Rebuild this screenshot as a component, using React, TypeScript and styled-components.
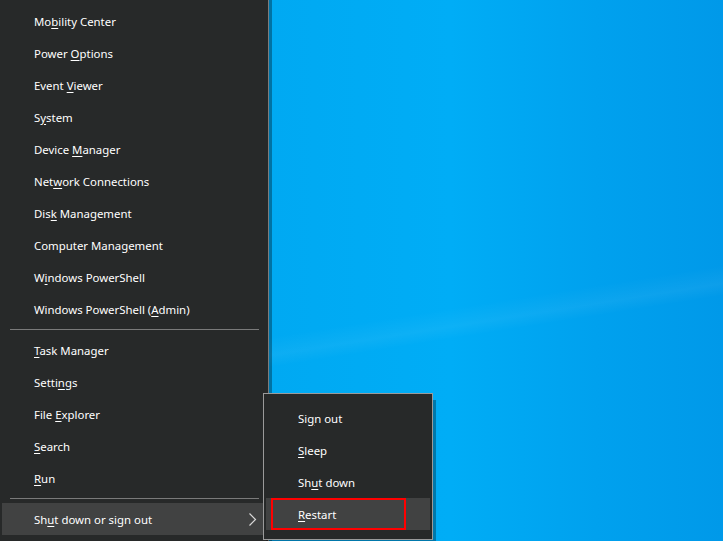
import styled, { createGlobalStyle } from 'styled-components';

const GlobalStyle = createGlobalStyle`
  html, body {
    margin: 0;
    padding: 0;
    background: #272929;
  }
  body {
    font-family: 'Noto Sans', 'Open Sans', sans-serif;
  }
`;

type Item = { pre: string; key: string; post: string };

const mainItems: Item[][] = [
  [
    { pre: 'Mo', key: 'b', post: 'ility Center' },
    { pre: 'Power ', key: 'O', post: 'ptions' },
    { pre: 'Event ', key: 'V', post: 'iewer' },
    { pre: 'S', key: 'y', post: 'stem' },
    { pre: 'Device ', key: 'M', post: 'anager' },
    { pre: 'Net', key: 'w', post: 'ork Connections' },
    { pre: 'Dis', key: 'k', post: ' Management' },
    { pre: 'Computer Mana', key: 'g', post: 'ement' },
    { pre: 'W', key: 'i', post: 'ndows PowerShell' },
    { pre: 'Windows PowerShell (', key: 'A', post: 'dmin)' },
  ],
  [
    { pre: '', key: 'T', post: 'ask Manager' },
    { pre: 'Setti', key: 'n', post: 'gs' },
    { pre: 'File ', key: 'E', post: 'xplorer' },
    { pre: '', key: 'S', post: 'earch' },
    { pre: '', key: 'R', post: 'un' },
  ],
];

const subItems: Item[] = [
  { pre: 'Si', key: 'g', post: 'n out' },
  { pre: '', key: 'S', post: 'leep' },
  { pre: 'Sh', key: 'u', post: 't down' },
  { pre: '', key: 'R', post: 'estart' },
];

function Label({ item }: { item: Item }) {
  return (
    <span>
      {item.pre}
      <Key>{item.key}</Key>
      {item.post}
    </span>
  );
}

function App() {
  return (
    <>
      <GlobalStyle />
      <Screen>
        <Menu>
          {mainItems.map((group, gi) => (
            <div key={gi}>
              {group.map((item, i) => (
                <Row key={i}>
                  <Label item={item} />
                </Row>
              ))}
              <Separator />
            </div>
          ))}
          <Row $active>
            <Label item={{ pre: 'Sh', key: 'u', post: 't down or sign out' }} />
            <Chevron width='9' height='15' viewBox='0 0 9 15'>
              <polyline points='1.5,1.5 7.5,7.5 1.5,13.5' />
            </Chevron>
          </Row>
        </Menu>
        <Desktop />
        <SubMenu>
          {subItems.map((item, i) => (
            <SubRow key={i} $active={i === 3}>
              {i === 3 ? <Marker /> : null}
              <Label item={item} />
            </SubRow>
          ))}
        </SubMenu>
      </Screen>
    </>
  );
}

const Screen = styled.div`
  position: relative;
  display: flex;
  width: 723px;
  height: 541px;
  overflow: hidden;
  background: #272929;
`;

const Menu = styled.div`
  position: relative;
  z-index: 1;
  width: 268px;
  flex-shrink: 0;
  padding-top: 5px;
  background: #272929;
  border-right: 1px solid #7d7d7d;
  box-shadow: 3px 0 0 rgba(0, 0, 0, 0.32);
  color: #ffffff;
  font-size: 11.4px;
`;

const Row = styled.div<{ $active?: boolean }>`
  display: flex;
  align-items: center;
  justify-content: space-between;
  height: 32px;
  margin: 0 4px 0 2px;
  padding: 0 8px 0 32px;
  background: ${(p) => (p.$active ? '#414242' : 'transparent')};
  white-space: nowrap;
`;

const Key = styled.span`
  text-decoration: underline;
  text-underline-offset: 2px;
  text-decoration-thickness: 1px;
`;

const Separator = styled.div`
  height: 9px;
  display: flex;
  align-items: center;
  margin: 0 9px 0 10px;

  &::after {
    content: '';
    flex: 1;
    border-top: 1px solid #7a7a7a;
  }
`;

const Chevron = styled.svg`
  fill: none;
  stroke: #d8d8d8;
  stroke-width: 1.2;
  margin-right: -1px;
`;

const Desktop = styled.div`
  flex: 1;
  background:
    linear-gradient(-9deg, transparent 40%, rgba(255, 255, 255, 0.05) 42%, transparent 45%),
    linear-gradient(90deg, #00a9f2 0%, #00adf6 40%, #00a1ee 72%, #0099e9 100%);
`;

const SubMenu = styled.div`
  position: absolute;
  z-index: 2;
  left: 263px;
  top: 393px;
  padding: 8px 2px;
  box-sizing: border-box;
  width: 170px;
  height: 147px;
  background: #272929;
  border: 1px solid #9a9a9a;
  box-shadow: 3px 7px 0 rgba(0, 0, 0, 0.3);
  color: #ffffff;
  font-size: 11.4px;
`;

const SubRow = styled.div<{ $active?: boolean }>`
  position: relative;
  display: flex;
  align-items: center;
  height: 32px;
  padding-left: 32px;
  background: ${(p) => (p.$active ? '#414242' : 'transparent')};
  white-space: nowrap;
`;

const Marker = styled.div`
  position: absolute;
  left: 5px;
  top: 0;
  width: 135px;
  height: 32px;
  box-sizing: border-box;
  border: 2px solid #ff0000;
`;

export default App;
